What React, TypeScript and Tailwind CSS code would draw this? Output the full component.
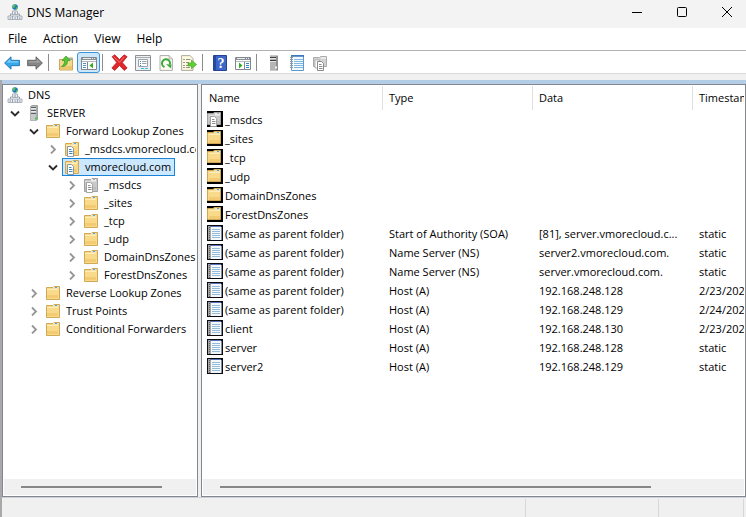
import React, { useState } from 'react';
import clsx from 'clsx';

type IconProps = { className?: string };

const Svg = ({ className = 'h-4 w-4', children }: IconProps & { children: React.ReactNode }) => (
  <svg viewBox="0 0 16 16" className={clsx('block shrink-0', className)} aria-hidden="true">
    {children}
  </svg>
);

const DnsIcon = ({ className }: IconProps) => (
  <Svg className={className}>
    <path d="M8 6v4M3.5 12.5v-2.5h9v2.5" fill="none" stroke="#9aa2ad" />
    <circle cx="8" cy="3" r="2.800" fill="#1f78b8" />
    <path d="M6 1.200c1-1 2-.6 2.400.2s-.8 1-1 2-1.600.400-2-.4zM9 3.200l1.700.2c0 1.200-.8 2-1.700 2.300z" fill="#58c24a" />
    <path d="M5.500 7h5v3.500h-5zM1 12h4.500v3.500H1zM5.500 12h5v3.500h-5zM10.500 12H15v3.500h-4.500z" fill="#e9edf2" stroke="#9aa2ad" strokeWidth=".8" />
    <path d="M7 9h2M2.500 14h1.500M7.500 14h1.500M12 14h1.500" stroke="#6f7985" strokeWidth=".8" />
  </Svg>
);

const ServerIcon = ({ className }: IconProps) => (
  <Svg className={className}>
    <path d="M4.500 1.500 6 .5h5.500v14l-1.500 1H4.500z" fill="#a9adaf" stroke="#909496" strokeWidth=".8" />
    <path d="M4.500 1.500H10v14H4.500z" fill="#c6c9ca" />
    <path d="M5 2.500h5M5 5.500h5M5 8.500h5" stroke="#5a6064" />
    <path d="M5 3.500h5M5 6.500h5" stroke="#e8ebeb" />
    <path d="M9 12.500h2v2H9z" fill="#4cc83c" />
  </Svg>
);

const ToolbarServerIcon = () => (
  <Svg>
    <path d="M4 .5h8v15H4z" fill="#8f8f8f" />
    <path d="M4 1h6v14H4z" fill="#b5b5b5" />
    <path d="M4 2.500h6M4 5.500h6" stroke="#3f3f3f" />
    <path d="M4 3.500h6M4 6.500h6" stroke="#e3e3e3" />
    <path d="M9 11.500h2v2H9z" fill="#f4f4f4" />
  </Svg>
);

interface FolderProps {
  gray?: boolean;
  page?: boolean;
  boxed?: boolean;
}

const FolderIcon = ({ gray, page, boxed }: FolderProps) => (
  <Svg>
    {boxed && <path d="M0 0h16v16H0z" fill="#000" />}
    <path
      d={boxed ? 'M.5 2.500H6l1-1h6.500v12H.5z' : 'M1.500 2.500H8l1-1h5.500v13h-13z'}
      fill={gray ? '#c9c9c9' : '#f9da8a'}
      stroke={gray ? '#a0a0a0' : '#cfa956'}
    />
    <path d="M2 10h11v3H2z" fill={gray ? '#bdbdbd' : '#f3cb72'} />
    <path d="M8 2h5v2H8z" fill={gray ? '#eee' : '#f3e3b4'} />
    <path d="M10 2h2v1h-2z" fill={gray ? '#aaa' : '#4da3de'} />
    <path d="M2 4h11v1H2z" fill={gray ? '#dedede' : '#ffedb8'} />
    {page && (
      <>
        <path d="M3.500 5.500h4l2 2v8h-6z" fill="#fff" stroke={gray ? '#9b9b9b' : '#7c92a8'} strokeWidth=".9" />
        <path d="M5 8.500h2.500M5 10.500h3.500M5 12.500h3.500" stroke={gray ? '#8e8e8e' : '#3f86be'} />
      </>
    )}
  </Svg>
);

const RecordIcon = () => (
  <Svg>
    <path d="M0 0h16v16H0z" fill="#0b0b10" />
    <path d="M1 1h13v14H1z" fill="#a6a6a6" />
    <path d="M4 2h10v13H4z" fill="#f4f8fb" />
    <path d="M3 1.500h11" stroke="#5873b8" />
    <path d="M14.500 2v13" stroke="#7f89a4" />
    <path d="M5 4.500h8M5 6.500h8M5 8.500h8M5 10.500h8M5 12.500h8" stroke="#94bcd8" />
    <path d="M2.500 2v13" stroke="#5e5e5e" strokeDasharray="1 1" />
  </Svg>
);

const ArrowIcon = ({ forward }: { forward?: boolean }) => (
  <Svg className={clsx('h-4 w-4', forward && 'rotate-180')}>
    <path
      d="M.6 8 7 1.800v3.500h8.400v5.400H7v3.500z"
      fill={forward ? '#858585' : '#36a9ec'}
      stroke={forward ? '#5f5f5f' : '#1a6fb0'}
      strokeWidth=".9"
    />
    <path
      d={forward ? 'M2.500 8.400 6.200 12V9.800h8.200V8.400z' : 'M2.500 7.600 6.200 4v2.200h8.200v1.400z'}
      fill={forward ? '#a5a5a5' : '#82d0fa'}
    />
  </Svg>
);

const UpFolderIcon = () => (
  <Svg>
    <path d="M1.500 4.500h6l1-1.500h6v12h-13z" fill="#f4d88c" stroke="#c4a055" strokeWidth=".9" />
    <path d="M2 11h12v3.500H2z" fill="#ecc66f" />
    <path d="M11 3.500h3v1.300h-3z" fill="#5aa7dc" />
    <path d="M3.500 11.500C6 10 6.500 8.500 6.500 5.500H4L8 1l4 4.500H9.500c0 4-2 6-6 6z" fill="#55c934" stroke="#3a9324" strokeWidth=".7" />
  </Svg>
);

const ConsoleIcon = ({ mirrored }: { mirrored?: boolean }) => (
  <Svg>
    <path d="M.5 2.500h15v12H.5z" fill="#fff" stroke="#82878d" />
    <path d="M1 3h14v2H1z" fill="#8b9096" />
    <path d="M2 3.500h8M11 3.500h1M13 3.500h1" stroke="#e9edf0" />
    <path d="M1 6.500h14" stroke="#b4b9be" />
    {mirrored ? (
      <>
        <path d="M9.500 7v7" stroke="#82878d" />
        <path d="M4 7.500v6L7.500 10.500z" fill="#2fae1e" />
        <path d="M11 8.500h3M11 10.500h3M11 12.500h3" stroke="#2d87cc" />
      </>
    ) : (
      <>
        <path d="M6.500 7v7" stroke="#82878d" />
        <path d="M12 7.500v6L8.500 10.500z" fill="#2fae1e" />
        <path d="M2 8.500h3M2 10.500h3M2 12.500h3" stroke="#4b94c8" />
      </>
    )}
  </Svg>
);

const DeleteIcon = () => (
  <Svg className="h-[17px] w-[17px]">
    <path
      d="M1 2.500 3.500.8 8 5.200 12.300.8 15.200 2.500 10.600 8l4.600 5.200-2.700 2.300L8 10.800l-4.500 4.700L.8 13.200 5.400 8z"
      fill="#e0272b"
      stroke="#b31a1d"
      strokeWidth=".7"
    />
    <path d="M2.500 2.700 8 7.700l4.500-5" fill="none" stroke="#f47a78" strokeWidth=".9" />
  </Svg>
);

const PropertiesIcon = () => (
  <Svg>
    <path d="M.5.5h15v15H.5z" fill="#eef0f2" stroke="#8d9299" />
    <path d="M1 2.500h14" stroke="#a4aab0" />
    <path d="M3.500 4.500h9v7h-9z" fill="#fff" stroke="#9ca2a9" />
    <path d="M5 6.500h1M5 8.500h1M5 10.500h1" stroke="#3e8bc4" />
    <path d="M7 6.500h4.500M7 8.500h4.500" stroke="#9ba1a8" />
    <path d="M6 13.500h3M10 13.500h3" stroke="#39bfe8" />
  </Svg>
);

const RefreshIcon = () => (
  <Svg>
    <path d="M2 .6h9l3.400 3.200v11.600H2z" fill="#fdfcf2" stroke="#a5a5a0" strokeWidth=".9" />
    <path d="M11 .6v3.200h3.400" fill="#e4e4de" stroke="#a5a5a0" strokeWidth=".7" />
    <path d="M6.500 12A4 4 0 1 1 11.800 9.500" fill="none" stroke="#38a83d" strokeWidth="2" />
    <path d="m8 9.300 5.500.2-.5 4z" fill="#38a83d" />
  </Svg>
);

const ExportIcon = () => (
  <Svg className="h-4 w-4">
    <path d="M.6.600h8.600L12 3.500v11.900H.600z" fill="#fdf9df" stroke="#a6a291" strokeWidth=".9" />
    <path d="M2.500 4.500h1M2.500 7.500h1M2.500 10.500h1M2.500 12.500h1" stroke="#4a4a4a" />
    <path d="M5 4.500h4.500M5 7.500h3M5 10.500h3M5 12.500h4" stroke="#94938b" />
    <path d="M7 8h3.500V5.200L15.600 9.500l-5.100 4.300V11H7z" fill="#61cf36" stroke="#3c9a20" strokeWidth=".6" />
  </Svg>
);

const HelpIcon = () => (
  <Svg>
    <path d="M1.500.5h13v15h-13z" fill="#3d66c8" stroke="#274494" />
    <path d="M2 1h2v14H2z" fill="#2a489f" />
    <text x="9" y="13" textAnchor="middle" fontSize="14" fontWeight="700" fill="#fff" fontFamily="Liberation Serif, serif">
      ?
    </text>
  </Svg>
);

const NotebookIcon = () => (
  <Svg>
    <path d="M2.500.5h12v15h-12z" fill="#f3f9fd" stroke="#5d9bcb" />
    <path d="M2 1h13" stroke="#2d6bb0" strokeWidth="1.400" />
    <path d="M5 4.500h9M5 6.500h9M5 8.500h9M5 10.500h9M5 12.500h9" stroke="#7fb8e0" />
    <path d="M1 2.500h3M1 4.500h3M1 6.500h3M1 8.500h3M1 10.500h3M1 12.500h3" stroke="#8e99a2" />
  </Svg>
);

const NewZoneIcon = () => (
  <Svg>
    <path d="M1.500 2.500h6l1-1h6v10h-13z" fill="#d2d2d2" stroke="#ababab" />
    <path d="M9 3h5" stroke="#fff" />
    <path d="M3 5h4.500v8H3z" fill="#fff" stroke="#a3a3a3" strokeWidth=".8" />
    <path d="M5.500 6.500h4l2 2v7h-6z" fill="#fff" stroke="#8a8a8a" />
    <path d="M7 9.500h2.500M7 11.500h3.500M7 13.500h3.500" stroke="#8d8d8d" />
  </Svg>
);

const ChevronIcon = ({ open }: { open?: boolean }) => (
  <svg viewBox="0 0 10 10" className="block h-[10px] w-[10px]" aria-hidden="true">
    {open ? (
      <path d="M1 3.500 5 7.500 9 3.500" fill="none" stroke="#2b2b2b" strokeWidth="1.800" />
    ) : (
      <path d="M3 1.500 7 5.500 3 9.500" fill="none" stroke="#969696" strokeWidth="1.800" />
    )}
  </svg>
);

type ToolbarItem = { label: string; icon: React.ReactNode; pressed?: boolean };

const toolbarGroups: ToolbarItem[][] = [
  [
    { label: 'Back', icon: <ArrowIcon /> },
    { label: 'Forward', icon: <ArrowIcon forward /> },
  ],
  [
    { label: 'Up one level', icon: <UpFolderIcon /> },
    { label: 'Show/Hide Console Tree', icon: <ConsoleIcon />, pressed: true },
  ],
  [
    { label: 'Delete', icon: <DeleteIcon /> },
    { label: 'Properties', icon: <PropertiesIcon /> },
    { label: 'Refresh', icon: <RefreshIcon /> },
    { label: 'Export List', icon: <ExportIcon /> },
  ],
  [
    { label: 'Help', icon: <HelpIcon /> },
    { label: 'Show/Hide Action Pane', icon: <ConsoleIcon mirrored /> },
  ],
  [
    { label: 'New Server', icon: <ToolbarServerIcon /> },
    { label: 'New Record', icon: <NotebookIcon /> },
    { label: 'New Zone', icon: <NewZoneIcon /> },
  ],
];

interface TreeNode {
  label: string;
  icon: React.ReactNode;
  indent: string;
  root?: boolean;
  open?: boolean;
}

const treeNodes: TreeNode[] = [
  { label: 'DNS', icon: <DnsIcon />, indent: 'pl-px', root: true },
  { label: 'SERVER', icon: <ServerIcon />, indent: 'pl-px', open: true },
  { label: 'Forward Lookup Zones', icon: <FolderIcon />, indent: 'pl-5', open: true },
  { label: '_msdcs.vmorecloud.com', icon: <FolderIcon page />, indent: 'pl-[39px]' },
  { label: 'vmorecloud.com', icon: <FolderIcon page />, indent: 'pl-[39px]', open: true },
  { label: '_msdcs', icon: <FolderIcon page gray />, indent: 'pl-[58px]' },
  { label: '_sites', icon: <FolderIcon />, indent: 'pl-[58px]' },
  { label: '_tcp', icon: <FolderIcon />, indent: 'pl-[58px]' },
  { label: '_udp', icon: <FolderIcon />, indent: 'pl-[58px]' },
  { label: 'DomainDnsZones', icon: <FolderIcon />, indent: 'pl-[58px]' },
  { label: 'ForestDnsZones', icon: <FolderIcon />, indent: 'pl-[58px]' },
  { label: 'Reverse Lookup Zones', icon: <FolderIcon />, indent: 'pl-5' },
  { label: 'Trust Points', icon: <FolderIcon />, indent: 'pl-5' },
  { label: 'Conditional Forwarders', icon: <FolderIcon />, indent: 'pl-5' },
];

const records = [
  { name: '_msdcs', kind: 'delegation' },
  { name: '_sites', kind: 'folder' },
  { name: '_tcp', kind: 'folder' },
  { name: '_udp', kind: 'folder' },
  { name: 'DomainDnsZones', kind: 'folder' },
  { name: 'ForestDnsZones', kind: 'folder' },
  { name: '(same as parent folder)', type: 'Start of Authority (SOA)', data: '[81], server.vmorecloud.c...', time: 'static' },
  { name: '(same as parent folder)', type: 'Name Server (NS)', data: 'server2.vmorecloud.com.', time: 'static' },
  { name: '(same as parent folder)', type: 'Name Server (NS)', data: 'server.vmorecloud.com.', time: 'static' },
  { name: '(same as parent folder)', type: 'Host (A)', data: '192.168.248.128', time: '2/23/2024' },
  { name: '(same as parent folder)', type: 'Host (A)', data: '192.168.248.129', time: '2/24/2024' },
  { name: 'client', type: 'Host (A)', data: '192.168.248.130', time: '2/23/2024' },
  { name: 'server', type: 'Host (A)', data: '192.168.248.128', time: 'static' },
  { name: 'server2', type: 'Host (A)', data: '192.168.248.129', time: 'static' },
];

const TitleBar = () => (
  <header className="flex h-7 shrink-0 items-center bg-[#f3f3f3] pb-1 pl-[7px]">
    <DnsIcon />
    <h1 className="pt-px pl-1 text-[12px]">DNS Manager</h1>
    <div className="ml-auto flex gap-[7px]">
      <button aria-label="Minimize" className="flex h-6 w-[38px] items-center justify-center">
        <svg viewBox="0 0 10 10" className="h-[10px] w-[10px]">
          <path d="M0 5.500h10" stroke="#000" />
        </svg>
      </button>
      <button aria-label="Maximize" className="flex h-6 w-[38px] items-center justify-center">
        <svg viewBox="0 0 10 10" className="h-[10px] w-[10px]">
          <rect x=".5" y=".5" width="9" height="9" rx="1" fill="none" stroke="#000" />
        </svg>
      </button>
      <button aria-label="Close" className="flex h-6 w-[38px] items-center justify-center">
        <svg viewBox="0 0 10 10" className="h-[10px] w-[10px]">
          <path d="m0 0 10 10M10 0 0 10" stroke="#000" />
        </svg>
      </button>
    </div>
  </header>
);

const Toolbar = () => (
  <div role="toolbar" className="flex h-[23px] shrink-0 items-center border-b border-[#d9d9d9] pt-px">
    {toolbarGroups.map((group, index) => (
      <React.Fragment key={index}>
        {index > 0 && (
          <div className="w-2 pl-[2px]">
            <div className="h-[17px] w-px bg-[#8c8c8c]" />
          </div>
        )}
        {group.map((item) => (
          <button
            key={item.label}
            aria-label={item.label}
            className={clsx(
              'flex h-[21px] w-[23px] items-center justify-center rounded-[3px]',
              item.pressed && 'border border-[#3b94dc] bg-[#cce6fa]'
            )}
          >
            {item.icon}
          </button>
        ))}
      </React.Fragment>
    ))}
  </div>
);

const ConsoleTree = () => {
  const [selected, setSelected] = useState('vmorecloud.com');

  return (
    <ul className="min-h-0 flex-1 overflow-hidden">
      {treeNodes.map((node) => (
        <li key={node.label} className={clsx('flex h-[18px]', node.indent)}>
          {!node.root && (
            <button
              aria-label={`Toggle ${node.label}`}
              aria-expanded={!!node.open}
              className="flex w-[19px] shrink-0 items-center justify-center"
            >
              <ChevronIcon open={node.open} />
            </button>
          )}
          <button
            onClick={() => setSelected(node.label)}
            className={clsx(
              'flex shrink-0 items-center gap-[5px] border pr-[3px] pl-px whitespace-nowrap',
              selected === node.label ? 'border-[#1883d7] bg-[#cce8ff]' : 'border-transparent'
            )}
          >
            {node.icon}
            {node.label}
          </button>
        </li>
      ))}
    </ul>
  );
};

const RecordTable = () => (
  <div className="min-h-0 flex-1 overflow-hidden">
    <table className="w-full table-fixed border-separate border-spacing-0 text-left whitespace-nowrap">
      <colgroup>
        <col className="w-[180px]" />
        <col className="w-[150px]" />
        <col className="w-[160px]" />
        <col />
      </colgroup>
      <thead>
        <tr className="h-6">
          <th className="border-r border-[#e0e0e0] p-0 pl-[6px] font-normal">Name</th>
          <th className="border-r border-[#e0e0e0] p-0 pl-[6px] font-normal">Type</th>
          <th className="border-r border-[#e0e0e0] p-0 pl-[6px] font-normal">Data</th>
          <th className="overflow-hidden p-0 pl-[6px] font-normal">Timestamp</th>
        </tr>
      </thead>
      <tbody className="leading-[17px]">
        {records.map((record, index) => (
          <tr key={index} className="h-[19px]">
            <td className="p-0 pl-1">
              <div className="flex items-start gap-[2px]">
                {record.kind ? (
                  <FolderIcon boxed gray={record.kind === 'delegation'} page={record.kind === 'delegation'} />
                ) : (
                  <RecordIcon />
                )}
                {record.name}
              </div>
            </td>
            <td className="p-0 pl-[6px]">{record.type}</td>
            <td className="p-0 pl-[6px]">{record.data}</td>
            <td className="overflow-hidden p-0 pl-[6px]">{record.time}</td>
          </tr>
        ))}
      </tbody>
    </table>
  </div>
);

const ScrollTrack = ({ thumb }: { thumb: string }) => (
  <div className="flex h-4 shrink-0 items-center bg-[#f0f0f0] px-[17px]">
    <div className={clsx('h-[2px] bg-[#868686]', thumb)} />
  </div>
);

export default function App() {
  return (
    <div className="flex h-screen flex-col overflow-hidden bg-white font-['Open_Sans','Noto_Sans',sans-serif] text-[11px] leading-4 text-black">
      <TitleBar />
      <nav className="flex h-[23px] shrink-0 items-center border-b border-[#b2b2b2] text-[12px]">
        <button className="px-2">File</button>
        <button className="px-2">Action</button>
        <button className="px-2">View</button>
        <button className="px-2">Help</button>
      </nav>
      <Toolbar />
      <div className="h-[6px] shrink-0 bg-[#f0f0f0]" />
      <div className="flex min-h-0 flex-1 flex-col border-l-2 border-[#a9a9a9] bg-[#f0f0f0]">
        <div className="h-1 shrink-0 bg-[#b4cde6]" />
        <main className="flex min-h-0 flex-1 gap-[3px]">
          <section aria-label="Console tree" className="flex w-[196px] shrink-0 flex-col border border-[#828790] bg-white p-px">
            <ConsoleTree />
            <ScrollTrack thumb="w-[89%]" />
          </section>
          <section aria-label="Records" className="flex min-w-0 flex-1 flex-col border border-[#828790] bg-white p-px">
            <RecordTable />
            <ScrollTrack thumb="w-[85%]" />
          </section>
        </main>
        <footer className="flex h-5 shrink-0 border-t border-[#cfcfd6] pt-px">
          <div className="flex-1 border-r border-[#d7d7d7]" />
          <div className="w-[133px] border-r border-[#d7d7d7]" />
          <div className="mr-[2px] w-[85px] border-r border-[#d7d7d7]" />
        </footer>
      </div>
    </div>
  );
}
